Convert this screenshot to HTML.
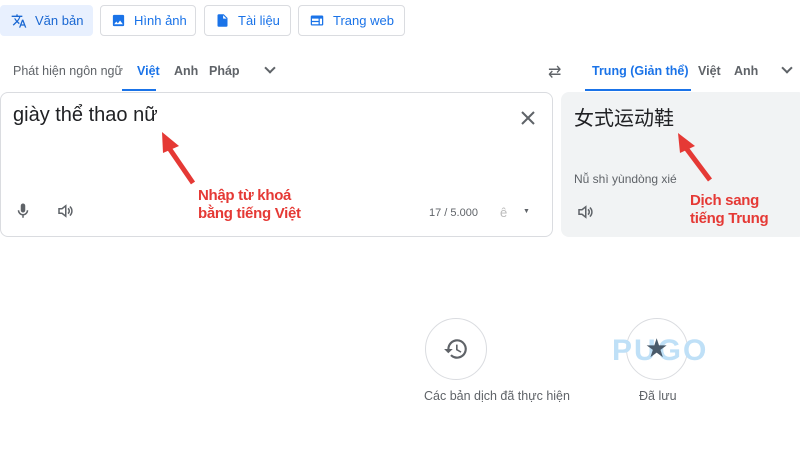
<!DOCTYPE html>
<html><head><meta charset="utf-8"><style>
*{margin:0;padding:0;box-sizing:border-box}
body{width:800px;height:450px;background:#fff;font-family:"Liberation Sans",Arial,sans-serif;position:relative;overflow:hidden;color:#3c4043}
.a{position:absolute}
.btn{position:absolute;top:5px;height:31px;border:1px solid #dadce0;border-radius:4px;font-size:13px;color:#1a73e8;display:flex;align-items:center;padding-left:10px;gap:8px}
.tab{position:absolute;top:64px;font-size:12.5px;color:#5f6368}
.red{color:#e53935;font-weight:bold;font-size:15px;letter-spacing:-0.3px;line-height:18px}
</style></head><body>
<div class="btn" style="left:0;width:93px;background:#e8f0fe;border-color:#e8f0fe;color:#1967d2">
<svg width="16" height="16" viewBox="0 0 24 24"><path fill="#1967d2" d="M12.87 15.07l-2.54-2.51.03-.03A17.5 17.5 0 0014.07 6H17V4h-7V2H8v2H1v2h11.17C11.5 7.920 10.44 9.75 9 11.35 8.07 10.32 7.3 9.19 6.69 8h-2c.73 1.63 1.73 3.17 2.98 4.56l-5.09 5.02L4 19l5-5 3.11 3.11.76-2.04zM18.5 10h-2L12 22h2l1.12-3h4.75L21 22h2l-4.5-12zm-2.62 7l1.620-4.33L19.12 17h-3.24z"/></svg>Văn bản</div>
<div class="btn" style="left:100px;width:96px"><svg width="15" height="15" viewBox="0 0 24 24"><path fill="#1a73e8" d="M21 19V5a2 2 0 00-2-2H5a2 2 0 00-2 2v14a2 2 0 002 2h14a2 2 0 002-2zM8.5 13.5l2.5 3 3.5-4.5 4.5 6H5l3.5-4.5z"/></svg>Hình ảnh</div>
<div class="btn" style="left:204px;width:87px"><svg width="15" height="15" viewBox="0 0 24 24"><path fill="#1a73e8" d="M6 2a2 2 0 00-2 2v16a2 2 0 002 2h12a2 2 0 002-2V8l-6-6H6zm7 7V3.5L18.5 9H13z"/></svg>Tài liệu</div>
<div class="btn" style="left:298px;width:107px"><svg width="16" height="15" viewBox="0 0 24 24"><path fill="#1a73e8" d="M20 4H4a2 2 0 00-2 2v12a2 2 0 002 2h16a2 2 0 002-2V6a2 2 0 00-2-2zM4 9h10.5v3.5H4V9zm0 5.5h10.5V18H4v-3.5zM20 18h-3.5V9H20v9z"/></svg>Trang web</div>

<div class="tab" style="left:13px">Phát hiện ngôn ngữ</div>
<div class="tab" style="left:137px;color:#1a73e8;font-weight:bold">Việt</div>
<div class="tab" style="left:174px;font-weight:bold">Anh</div>
<div class="tab" style="left:209px;font-weight:bold">Pháp</div>
<div class="a" style="left:266px;top:64px;width:8px;height:8px;border-right:2px solid #5f6368;border-bottom:2px solid #5f6368;transform:rotate(45deg)"></div>
<div class="a" style="left:122px;top:89px;width:34px;height:2px;background:#1a73e8"></div>

<div class="a" style="left:548px;top:62px;font-size:16px;color:#5f6368">⇄</div>
<div class="tab" style="left:592px;color:#1a73e8;font-weight:bold">Trung (Giản thể)</div>
<div class="tab" style="left:698px;font-weight:bold">Việt</div>
<div class="tab" style="left:734px;font-weight:bold">Anh</div>
<div class="a" style="left:783px;top:64px;width:8px;height:8px;border-right:2px solid #5f6368;border-bottom:2px solid #5f6368;transform:rotate(45deg)"></div>
<div class="a" style="left:585px;top:89px;width:106px;height:2px;background:#1a73e8"></div>

<div class="a" style="left:0;top:92px;width:553px;height:145px;border:1px solid #dadce0;border-radius:8px"></div>
<div class="a" style="left:13px;top:104px;font-size:20px;color:#202124">giày thể thao nữ</div>
<svg class="a" style="left:520px;top:110px" width="16" height="16"><path d="M2 2L14 14M14 2L2 14" stroke="#5f6368" stroke-width="2"/></svg>
<svg class="a" style="left:14px;top:202px" width="18" height="18" viewBox="0 0 24 24"><path fill="#5f6368" d="M12 14a3 3 0 003-3V5a3 3 0 00-6 0v6a3 3 0 003 3zm5-3a5 5 0 01-10 0H5c0 3.5 2.6 6.4 6 6.9V21h2v-3.1c3.4-.5 6-3.4 6-6.9h-2z"/></svg>
<svg class="a" style="left:56px;top:202px" width="18" height="18" viewBox="0 0 24 24"><path fill="none" stroke="#5f6368" stroke-width="2" d="M4 9v6h4l5 4V5L8 9H4z M16 8.5a4.5 4.5 0 010 7 M18.5 6a8 8 0 010 12"/></svg>
<div class="a" style="left:429px;top:207px;font-size:11px;color:#5f6368">17 / 5.000</div>
<div class="a" style="left:500px;top:205px;font-size:13px;color:#bbb">ê</div>
<div class="a" style="left:523px;top:208px;font-size:7px;color:#5f6368">▼</div>
<div class="a red" style="left:198px;top:187px">Nhập từ khoá<br>bằng tiếng Việt</div>
<svg class="a" style="left:155px;top:128px" width="45" height="60"><line x1="38" y1="55" x2="14" y2="20" stroke="#e53935" stroke-width="5"/><polygon points="7,4 24,18 8,25" fill="#e53935"/></svg>

<div class="a" style="left:561px;top:92px;width:245px;height:145px;background:#f1f3f4;border-radius:8px"></div>
<div class="a" style="left:574px;top:104px;font-size:20px;color:#202124;font-family:'Noto Sans CJK SC',sans-serif;line-height:26px">女式运动鞋</div>
<div class="a" style="left:574px;top:172px;font-size:12px;color:#5f6368">Nǚ shì yùndòng xié</div>
<svg class="a" style="left:576px;top:203px" width="18" height="18" viewBox="0 0 24 24"><path fill="none" stroke="#5f6368" stroke-width="2" d="M4 9v6h4l5 4V5L8 9H4z M16 8.5a4.5 4.5 0 010 7 M18.5 6a8 8 0 010 12"/></svg>
<div class="a red" style="left:690px;top:192px">Dịch sang<br>tiếng Trung</div>
<svg class="a" style="left:672px;top:130px" width="45" height="55"><line x1="38" y1="50" x2="14" y2="18" stroke="#e53935" stroke-width="5"/><polygon points="6,3 23,16 8,23" fill="#e53935"/></svg>

<div class="a" style="left:425px;top:318px;width:62px;height:62px;border:1px solid #dadce0;border-radius:50%"></div>
<svg class="a" style="left:443px;top:336px" width="26" height="26" viewBox="0 0 24 24"><path fill="#5f6368" d="M13 3a9 9 0 00-9 9H1l3.9 3.9L9 12H6a7 7 0 112.05 4.95l-1.42 1.42A9 9 0 1013 3zm-1 5v5l4.3 2.5.7-1.2-3.5-2.1V8H12z"/></svg>
<div class="a" style="left:424px;top:389px;font-size:12.5px;color:#5f6368">Các bản dịch đã thực hiện</div>
<div class="a" style="left:626px;top:318px;width:62px;height:62px;border:1px solid #dadce0;border-radius:50%"></div>
<div class="a" style="left:612px;top:334px;font-size:30px;font-weight:bold;color:#bfe0f7;letter-spacing:2px">PUGO</div>
<div class="a" style="left:645px;top:333px;font-size:26px;color:#4a5a6a">★</div>
<div class="a" style="left:639px;top:389px;font-size:12.5px;color:#5f6368">Đã lưu</div>
</body></html>
